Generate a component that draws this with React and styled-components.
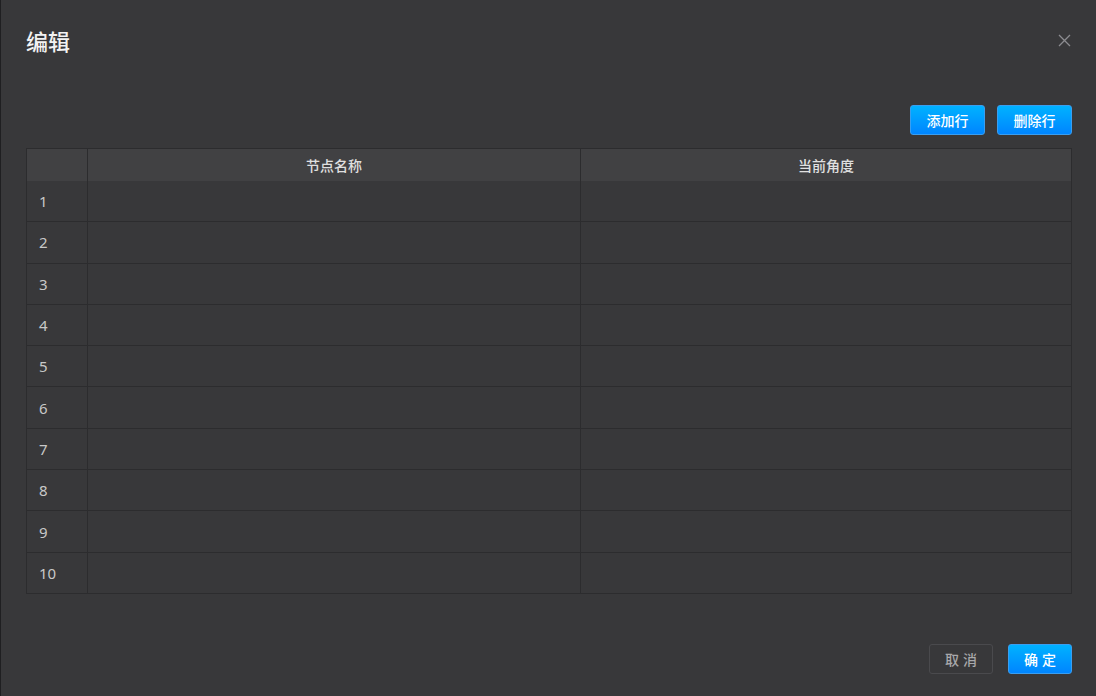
import React from 'react';
import styled, { createGlobalStyle } from 'styled-components';

const GlobalStyle = createGlobalStyle`
  html, body {
    margin: 0;
    padding: 0;
    background: #38383a;
  }
  * {
    box-sizing: border-box;
  }
`;

const Modal = styled.div`
  width: 1096px;
  height: 696px;
  background: #38383a;
  border-left: 1px solid #1f1f21;
  font-family: "Noto Sans CJK SC", "Noto Sans", sans-serif;
  color: #e6e6e6;
  display: flex;
  flex-direction: column;
  padding: 0 24px 22px 25px;
`;

const Header = styled.div`
  height: 82px;
  display: flex;
  align-items: center;
  justify-content: space-between;
  padding-bottom: 2px;
`;

const Title = styled.h2`
  margin: 0;
  font-size: 22px;
  font-weight: 500;
  color: #f2f2f2;
`;

const Close = styled.button`
  background: none;
  border: none;
  padding: 0;
  width: 16px;
  height: 16px;
  display: flex;
  align-items: center;
  justify-content: center;
  cursor: pointer;
`;

const Toolbar = styled.div`
  display: flex;
  justify-content: flex-end;
  gap: 12px;
  margin-top: 23px;
  margin-bottom: 13px;
`;

const Button = styled.button`
  height: 30px;
  width: ${p => p.$w || 75}px;
  padding: 0;
  border-radius: 3px;
  font-family: "Noto Sans CJK SC", sans-serif;
  font-size: 14px;
  font-weight: 500;
  letter-spacing: ${p => (p.$spaced ? '4px' : '0')};
  text-indent: ${p => (p.$spaced ? '4px' : '0')};
  cursor: pointer;
  color: ${p => (p.$primary ? '#ffffff' : '#a8a8aa')};
  background: ${p => (p.$primary ? 'linear-gradient(#00b2ff, #0085ff)' : 'transparent')};
  border: 1px solid ${p => (p.$primary ? '#3a9ef0' : '#4a4a4d')};
`;

const Table = styled.div`
  width: 1046px;
  border-top: 1px solid #2c2c2e;
  border-left: 1px solid #2c2c2e;
  border-right: 1px solid #2c2c2e;
  display: grid;
  grid-template-columns: 60px 493px 1fr;
`;

const HeadCell = styled.div`
  height: 32px;
  background: #414143;
  display: flex;
  align-items: center;
  justify-content: center;
  font-size: 14px;
  font-weight: 500;
  color: #e0e0e0;
  border-left: ${p => (p.$first ? 'none' : '1px solid #2c2c2e')};
`;

const Cell = styled.div`
  height: 41.3px;
  display: flex;
  align-items: center;
  padding-left: ${p => (p.$index ? '12px' : '0')};
  font-family: "Noto Sans", sans-serif;
  font-size: 15px;
  color: #c8c8c8;
  border-bottom: 1px solid #2c2c2e;
  border-left: ${p => (p.$index ? 'none' : '1px solid #2c2c2e')};
`;

const Footer = styled.div`
  margin-top: auto;
  display: flex;
  justify-content: flex-end;
  gap: 15px;
`;

const rows = Array.from({ length: 10 }, (_, i) => i + 1);

export default function App() {
  return (
    <>
      <GlobalStyle />
      <Modal>
        <Header>
          <Title>编辑</Title>
          <Close aria-label="close">
            <svg width="13" height="13" viewBox="0 0 13 13">
              <path d="M1 1 L12 12 M12 1 L1 12" stroke="#8c8c90" strokeWidth="1.3" />
            </svg>
          </Close>
        </Header>
        <Toolbar>
          <Button $primary>添加行</Button>
          <Button $primary>删除行</Button>
        </Toolbar>
        <Table>
          <HeadCell $first />
          <HeadCell>节点名称</HeadCell>
          <HeadCell>当前角度</HeadCell>
          {rows.map(n => (
            <React.Fragment key={n}>
              <Cell $index>{n}</Cell>
              <Cell />
              <Cell />
            </React.Fragment>
          ))}
        </Table>
        <Footer>
          <Button $w={64} $spaced>取消</Button>
          <Button $w={64} $primary $spaced>确定</Button>
        </Footer>
      </Modal>
    </>
  );
}
